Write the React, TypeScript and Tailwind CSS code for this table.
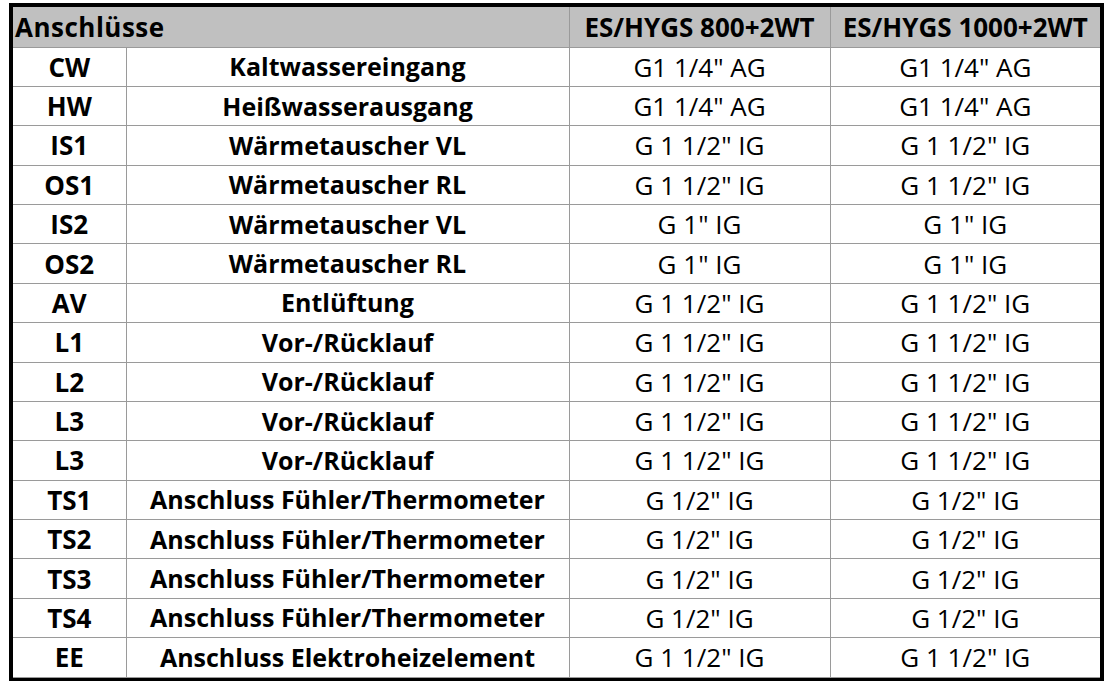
const rows: [string, string, string, string][] = [
  ["CW", "Kaltwassereingang", "G1 1/4\" AG", "G1 1/4\" AG"],
  ["HW", "Heißwasserausgang", "G1 1/4\" AG", "G1 1/4\" AG"],
  ["IS1", "Wärmetauscher VL", "G 1 1/2\" IG", "G 1 1/2\" IG"],
  ["OS1", "Wärmetauscher RL", "G 1 1/2\" IG", "G 1 1/2\" IG"],
  ["IS2", "Wärmetauscher VL", "G 1\" IG", "G 1\" IG"],
  ["OS2", "Wärmetauscher RL", "G 1\" IG", "G 1\" IG"],
  ["AV", "Entlüftung", "G 1 1/2\" IG", "G 1 1/2\" IG"],
  ["L1", "Vor-/Rücklauf", "G 1 1/2\" IG", "G 1 1/2\" IG"],
  ["L2", "Vor-/Rücklauf", "G 1 1/2\" IG", "G 1 1/2\" IG"],
  ["L3", "Vor-/Rücklauf", "G 1 1/2\" IG", "G 1 1/2\" IG"],
  ["L3", "Vor-/Rücklauf", "G 1 1/2\" IG", "G 1 1/2\" IG"],
  ["TS1", "Anschluss Fühler/Thermometer", "G 1/2\" IG", "G 1/2\" IG"],
  ["TS2", "Anschluss Fühler/Thermometer", "G 1/2\" IG", "G 1/2\" IG"],
  ["TS3", "Anschluss Fühler/Thermometer", "G 1/2\" IG", "G 1/2\" IG"],
  ["TS4", "Anschluss Fühler/Thermometer", "G 1/2\" IG", "G 1/2\" IG"],
  ["EE", "Anschluss Elektroheizelement", "G 1 1/2\" IG", "G 1 1/2\" IG"],
];

export default function App() {
  return (
    <div className="w-[1112px] h-[687px] bg-white pl-[9px] pt-[3px] font-['Open_Sans',sans-serif] text-black">
      <div className="w-[1095px] h-[678px] border-4 border-black">
        <table className="w-full table-fixed border-collapse leading-none">
          <colgroup>
            <col className="w-[113px]" />
            <col className="w-[443px]" />
            <col className="w-[261px]" />
            <col className="w-[270px]" />
          </colgroup>
          <thead>
            <tr className="h-[40px] bg-[#c0c0c0] font-bold text-[26px]">
              <th colSpan={2} className="text-left pl-[2px] border-r border-b border-[#9a9a9a] tracking-[0.5px]">
                Anschlüsse
              </th>
              <th className="border-r border-b border-[#9a9a9a]">ES/HYGS 800+2WT</th>
              <th className="border-b border-[#9a9a9a]">ES/HYGS 1000+2WT</th>
            </tr>
          </thead>
          <tbody>
            {rows.map((r, i) => (
              <tr key={i} className="h-[39.375px]">
                <td className="text-center font-bold text-[26px] border-r border-b border-[#9a9a9a]">{r[0]}</td>
                <td className="text-center font-bold text-[25px] border-r border-b border-[#9a9a9a]">{r[1]}</td>
                <td className="text-center text-[26px] border-r border-b border-[#9a9a9a]">{r[2]}</td>
                <td className="text-center text-[26px] border-b border-[#9a9a9a]">{r[3]}</td>
              </tr>
            ))}
          </tbody>
        </table>
      </div>
    </div>
  );
}
